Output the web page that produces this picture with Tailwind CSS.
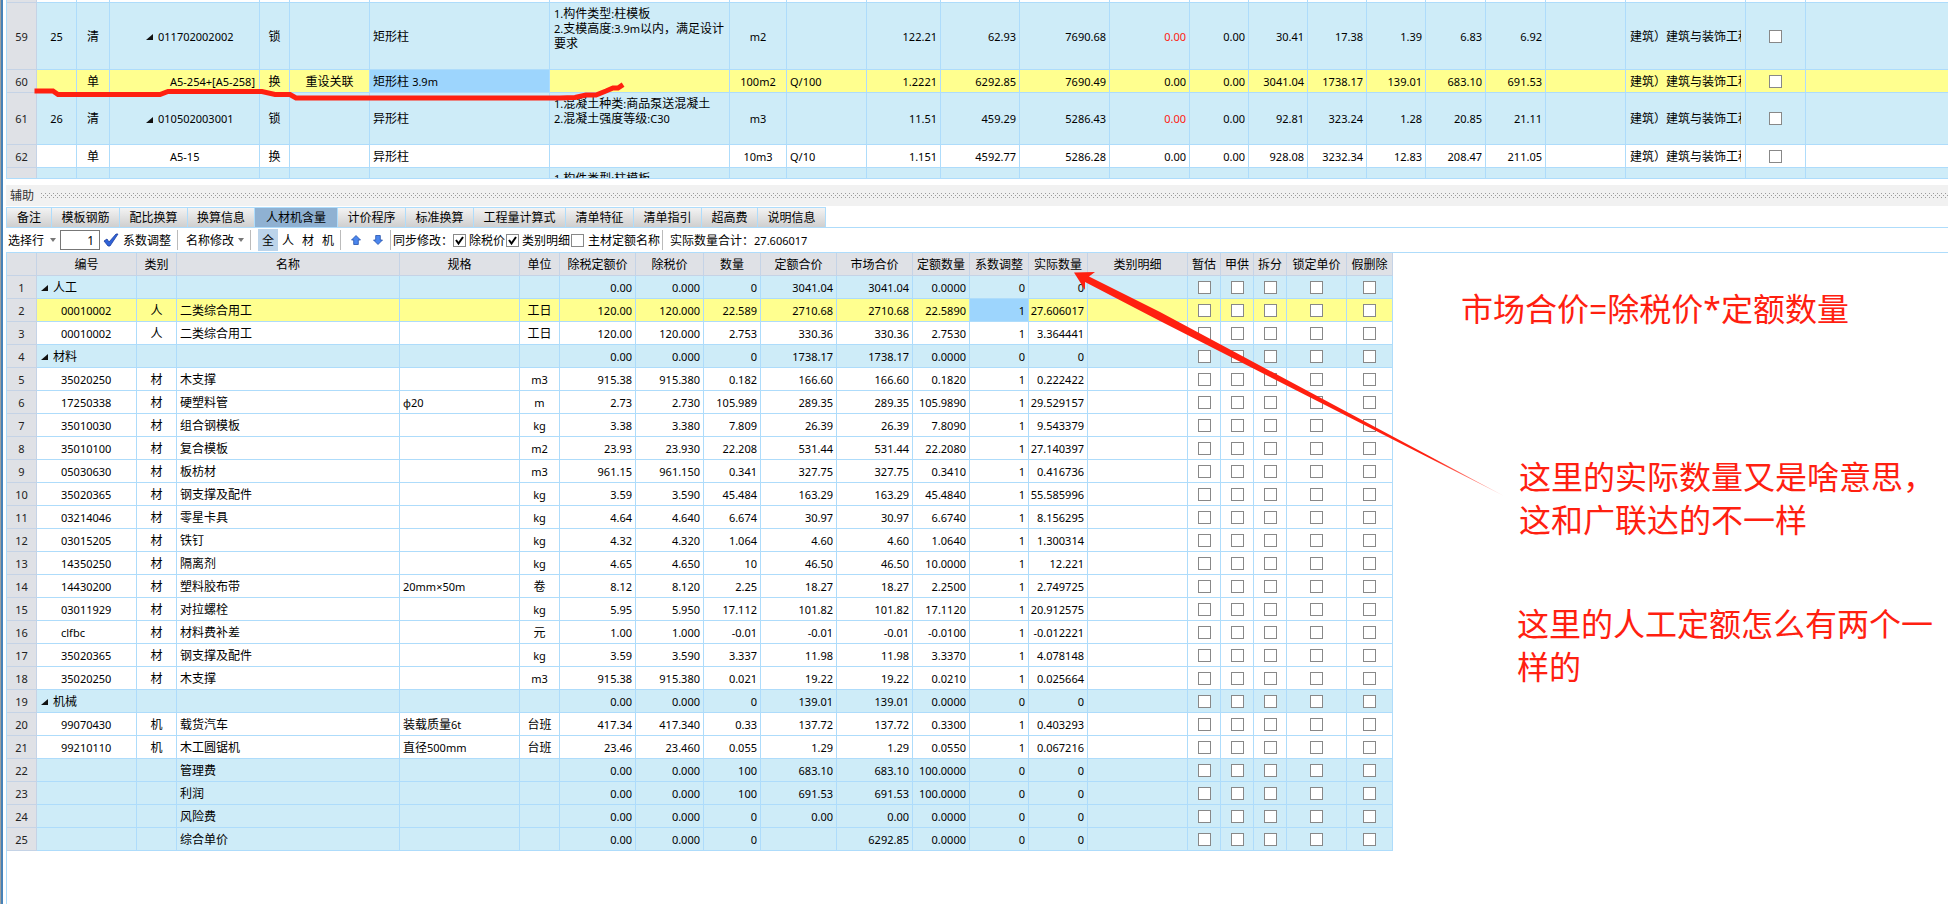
<!DOCTYPE html>
<html lang="zh-CN">
<head>
<meta charset="utf-8">
<title>人材机含量</title>
<script src="https://cdn.jsdelivr.net/npm/@tailwindcss/browser@4"></script>
</head>
<body class="bg-white text-black text-[12px] leading-[15px] font-['Noto_Sans','Noto_Sans_CJK_SC',sans-serif]">
<div class="relative min-h-screen flex overflow-hidden">
  <div class="w-[3px] shrink-0 bg-[#4682b8] border-l border-[#a0a0a0]"></div>
  <main class="flex-1 min-w-0 ml-[3px]">
    <section class="h-[179px] overflow-hidden border-l border-b border-[#aedcfb]" aria-label="清单">
      <table class="w-full table-fixed border-separate border-spacing-0">
        <colgroup id="billCols"></colgroup>
        <tbody id="bill"></tbody>
      </table>
    </section>

    <div class="mt-[6px] h-[21px] bg-[#f1f1f1] flex items-center gap-[7px] pl-1 pr-0">
      <span class="text-[#333]">辅助</span>
      <svg class="flex-1 h-[5px]" aria-hidden="true"><defs><pattern id="grip" width="4" height="4" patternUnits="userSpaceOnUse"><rect width="1" height="1" fill="#9a9a9a"/><rect x="2" y="2" width="1" height="1" fill="#9a9a9a"/></pattern></defs><rect width="100%" height="5" fill="url(#grip)"/></svg>
    </div>

    <nav class="mt-px h-[21px] flex border-b border-[#aedcfb]" id="tabs"></nav>

    <div class="h-6 flex items-center whitespace-nowrap">
      <button class="ml-[2px]">选择行</button>
      <svg class="ml-[6px] w-[6px] h-1" viewBox="0 0 6 4"><path d="M0 0h6L3 4z" fill="#777"/></svg>
      <input class="ml-[4px] w-10 h-5 border border-[#777] bg-white text-right pr-[5px]" value="1" aria-label="选择行">
      <button class="ml-[3px] flex items-center gap-[4px]">
        <svg class="w-4 h-[14px]" viewBox="0 0 16 14"><path d="M1 8l3-2 2 3L13 1l2 0L7 13H5z" fill="#2f62d8" stroke="#1d3f9e" stroke-width=".8"/></svg>
        系数调整</button>
      <i class="ml-[6px] w-px h-5 bg-[#bbb]"></i>
      <button class="ml-[8px]">名称修改</button>
      <svg class="ml-[4px] w-[6px] h-1" viewBox="0 0 6 4"><path d="M0 0h6L3 4z" fill="#777"/></svg>
      <i class="ml-[6px] w-px h-5 bg-[#bbb]"></i>
      <button class="ml-[7px] w-5 h-[22px] bg-[#bcd4ea]">全</button>
      <button class="w-5 h-[22px]">人</button>
      <button class="w-5 h-[22px]">材</button>
      <button class="w-5 h-[22px]">机</button>
      <i class="ml-[2px] w-px h-5 bg-[#bbb]"></i>
      <button class="ml-[10px]" aria-label="上移"><svg class="w-[10px] h-[10px]" viewBox="0 0 10 10"><path d="M5 .5L9.5 5H7.3v4.5H2.7V5H.5z" fill="#4b86ee" stroke="#2450ab" stroke-width=".8"/></svg></button>
      <button class="ml-[12px]" aria-label="下移"><svg class="w-[10px] h-[10px]" viewBox="0 0 10 10"><path d="M5 9.5L.5 5h2.2V.5h4.6V5h2.2z" fill="#4b86ee" stroke="#2450ab" stroke-width=".8"/></svg></button>
      <i class="ml-[7px] w-px h-5 bg-[#bbb]"></i>
      <span class="ml-[2px] w-[60px]">同步修改：</span>
      <label class="flex items-center gap-[3px] w-[53px]"><input type="checkbox" checked class="appearance-none w-[13px] h-[13px] border border-[#888] bg-white checked:bg-[url('data:image/svg+xml,%3Csvg%20xmlns=%22http://www.w3.org/2000/svg%22%20viewBox=%220%200%2011%2011%22%3E%3Cpath%20d=%22M2%205l2.500%203.500L9%202%22%20fill=%22none%22%20stroke=%22black%22%20stroke-width=%222%22/%3E%3C/svg%3E')]">除税价</label>
      <label class="flex items-center gap-[3px] w-[65px]"><input type="checkbox" checked class="appearance-none w-[13px] h-[13px] border border-[#888] bg-white checked:bg-[url('data:image/svg+xml,%3Csvg%20xmlns=%22http://www.w3.org/2000/svg%22%20viewBox=%220%200%2011%2011%22%3E%3Cpath%20d=%22M2%205l2.500%203.500L9%202%22%20fill=%22none%22%20stroke=%22black%22%20stroke-width=%222%22/%3E%3C/svg%3E')]">类别明细</label>
      <label class="flex items-center gap-[4px]"><input type="checkbox" class="appearance-none w-[13px] h-[13px] border border-[#888] bg-white">主材定额名称</label>
      <i class="ml-[2px] w-px h-5 bg-[#bbb]"></i>
      <span class="ml-[7px]">实际数量合计：</span><span class="text-[11px]">27.606017</span>
    </div>

    <section class="border-l border-t border-[#aedcfb] min-h-[652px]" aria-label="人材机含量">
      <table class="table-fixed w-[1386px] border-separate border-spacing-0">
        <colgroup id="resCols"></colgroup>
        <thead><tr id="resHead"></tr></thead>
        <tbody id="res"></tbody>
      </table>
    </section>
  </main>

  <svg class="absolute left-0 top-0 w-[1520px] h-[520px] pointer-events-none" viewBox="0 0 1520 520" aria-hidden="true">
    <defs><linearGradient id="fade" gradientUnits="userSpaceOnUse" x1="1430" y1="456" x2="1504" y2="496"><stop offset="0" stop-color="#ff2010"/><stop offset="1" stop-color="#ff2010" stop-opacity=".3"/></linearGradient></defs>
    <path d="M37 91H53L58 94.500H160L168 91.500H262L275 94.500H290L296 98H560L575 97.500L586 95H596L606 91L613 88H618L621 86" fill="none" stroke="#ff2010" stroke-width="5" stroke-linecap="square"/>
    <path d="M1074 272.500L1095 272L1089 276.500L1160 312L1504 496L1160 321L1085 282L1085 290z" fill="url(#fade)"/>
  </svg>
  <p class="absolute left-[1461px] top-[287px] text-[32px] leading-[43px] whitespace-nowrap text-[#ff2010]">市场合价=除税价*定额数量</p>
  <p class="absolute left-[1519px] top-[455px] text-[32px] leading-[43px] whitespace-nowrap text-[#ff2010]">这里的实际数量又是啥意思，<br>这和广联达的不一样</p>
  <p class="absolute left-[1517px] top-[602px] text-[32px] leading-[43px] whitespace-nowrap text-[#ff2010]">这里的人工定额怎么有两个一<br>样的</p>
</div>

<script>
const $ = id => document.getElementById(id);
const cols = ws => ws.map(w => w ? `<col style="width:${w}px">` : '<col>').join('');
// Latin runs are set one pixel smaller than the Chinese text beside them
const fmt = s => String(s).replace(/[\x21-\x7e\u00d7\u03c6]+(?: +[\x21-\x7e]+)*/g, m => `<span class="text-[11px]">${m}</span>`);
const box = n => `<input type="checkbox" aria-label="${n}" class="block mx-auto appearance-none w-[13px] h-[13px] border border-[#888] bg-white">`;
const tri = '<svg class="inline-block w-[7px] h-[6px] mr-[5px]" viewBox="0 0 7 6"><path d="M7 0v6H0z" fill="#111"/></svg>';
const BG = {g: 'bg-[#ceecf8]', y: 'bg-[#ffff8f]', w: 'bg-white'};
const NUM = 'border-r border-b border-[#c5d3e6] bg-[#dfe1e6] p-0 text-center font-normal text-[#222]';
const CELL = 'border-r border-b border-[#aedcfb] p-0 whitespace-nowrap overflow-hidden';
const AL = {l: 'text-left pl-[3px]', r: 'text-right pr-[3px]', c: 'text-center'};

// ---- bill table ----
$('billCols').innerHTML = cols([30,40,33,150,30,80,180,180,57,80,74,79,90,80,59,59,59,59,60,60,80,120,60,0]);
const bill = [
 ['w','h-[3px]'],
 ['g','h-[67px]','59','25','清','t011702002002','锁','','矩形柱','1.构件类型:柱模板<br>2.支模高度:3.9m以内，满足设计<br>要求','m2','','122.21','62.93','7690.68','0.00','0.00','30.41','17.38','1.39','6.83','6.92'],
 ['y','h-[23px]','60','','单','A5-254+[A5-258]','换','重设关联','矩形柱 3.9m','','100m2','Q/100','1.2221','6292.85','7690.49','0.00','0.00','3041.04','1738.17','139.01','683.10','691.53'],
 ['g','h-[52px]','61','26','清','t010502003001','锁','','异形柱','1.混凝土种类:商品泵送混凝土<br>2.混凝土强度等级:C30','m3','','11.51','459.29','5286.43','0.00','0.00','92.81','323.24','1.28','20.85','21.11'],
 ['w','h-[23px]','62','','单','A5-15','换','','异形柱','','10m3','Q/10','1.151','4592.77','5286.28','0.00','0.00','928.08','3232.34','12.83','208.47','211.05'],
 ['g','h-[11px]']
];
const billAl = 'ccdcclxclrrrrrrrrrr';
$('bill').innerHTML = bill.map(([t, h, no = '', ...v], i) => {
  const full = v.length > 0;
  let row = `<tr class="${h} ${BG[t]}"><th scope="row" class="${NUM}">${fmt(no)}</th>`;
  for (let c = 0; c < 19; c++) {
    const s = v[c] || '';
    if (c === 2) {
      const parent = s[0] === 't';
      row += `<td class="${CELL} text-left ${parent ? 'pl-9' : 'pl-[60px]'}">${parent ? tri + fmt(s.slice(1)) : fmt(s)}</td>`;
    } else if (c === 6) {
      row += i === 5
        ? `<td class="border-r border-b border-[#aedcfb] p-0 pl-1 whitespace-nowrap"><div class="h-[10px] overflow-hidden pt-[3px]">${fmt('1.构件类型:柱模板')}</div></td>`
        : `<td class="border-r border-b border-[#aedcfb] p-0 pl-1 ${s ? 'pt-[3px]' : ''} align-top whitespace-nowrap">${s.split('<br>').map(fmt).join('<br>')}</td>`;
    } else {
      const extra = c === 5 && t === 'y' ? 'bg-[#9dd5fd]' : c === 12 && t === 'g' ? 'text-[#ff2010]' : '';
      const al = c === 7 ? AL.c : AL[billAl[c]];
      row += `<td class="${CELL} ${al} ${extra}">${fmt(s)}</td>`;
    }
  }
  return row + `<td class="${CELL}"></td><td class="${CELL}">${full ? '<div class="mx-1 overflow-hidden">建筑）建筑与装饰工程</div>' : ''}</td><td class="${CELL}">${full ? box('选择 ' + no) : ''}</td><td class="border-b border-[#aedcfb] p-0"></td></tr>`;
}).join('');

// ---- tabs ----
const tabs = [['备注','w-[46px] border-l'],['模板钢筋','w-[68px]'],['配比换算','w-[68px]'],['换算信息','w-[67px]'],['人材机含量','w-[83px]'],['计价程序','w-[68px]'],['标准换算','w-[68px]'],['工程量计算式','w-[92px]'],['清单特征','w-[68px]'],['清单指引','w-[68px]'],['超高费','w-[56px]'],['说明信息','w-[68px]']];
$('tabs').innerHTML = tabs.map(([n, w], i) => `<button class="${w} border-t border-r border-[#aedcfb] leading-[18px] ${i === 4 ? 'bg-[#8fb1d2]' : 'bg-linear-to-b from-[#f3f3f3] to-[#cfcfcf]'}">${n}</button>`).join('');

// ---- resource table ----
$('resCols').innerHTML = cols([30,100,40,223,120,40,76,68,57,76,76,57,59,59,100,33,33,33,60,46]);
const heads = ['','编号','类别','名称','规格','单位','除税定额价','除税价','数量','定额合价','市场合价','定额数量','系数调整','实际数量','类别明细','暂估','甲供','拆分','锁定单价','假删除'];
$('resHead').innerHTML = heads.map(h => `<th scope="col" class="h-[23px] border-r border-b border-[#c5d3e6] bg-[#dfe1e6] p-0 font-normal whitespace-nowrap">${h}</th>`).join('');
const res = `g|t人工|||||0.00|0.000|0|3041.04|3041.04|0.0000|0|0
y|00010002|人|二类综合用工||工日|120.00|120.000|22.589|2710.68|2710.68|22.5890|1|27.606017
w|00010002|人|二类综合用工||工日|120.00|120.000|2.753|330.36|330.36|2.7530|1|3.364441
g|t材料|||||0.00|0.000|0|1738.17|1738.17|0.0000|0|0
w|35020250|材|木支撑||m3|915.38|915.380|0.182|166.60|166.60|0.1820|1|0.222422
w|17250338|材|硬塑料管|φ20|m|2.73|2.730|105.989|289.35|289.35|105.9890|1|29.529157
w|35010030|材|组合钢模板||kg|3.38|3.380|7.809|26.39|26.39|7.8090|1|9.543379
w|35010100|材|复合模板||m2|23.93|23.930|22.208|531.44|531.44|22.2080|1|27.140397
w|05030630|材|板枋材||m3|961.15|961.150|0.341|327.75|327.75|0.3410|1|0.416736
w|35020365|材|钢支撑及配件||kg|3.59|3.590|45.484|163.29|163.29|45.4840|1|55.585996
w|03214046|材|零星卡具||kg|4.64|4.640|6.674|30.97|30.97|6.6740|1|8.156295
w|03015205|材|铁钉||kg|4.32|4.320|1.064|4.60|4.60|1.0640|1|1.300314
w|14350250|材|隔离剂||kg|4.65|4.650|10|46.50|46.50|10.0000|1|12.221
w|14430200|材|塑料胶布带|20mm×50m|卷|8.12|8.120|2.25|18.27|18.27|2.2500|1|2.749725
w|03011929|材|对拉螺栓||kg|5.95|5.950|17.112|101.82|101.82|17.1120|1|20.912575
w|clfbc|材|材料费补差||元|1.00|1.000|-0.01|-0.01|-0.01|-0.0100|1|-0.012221
w|35020365|材|钢支撑及配件||kg|3.59|3.590|3.337|11.98|11.98|3.3370|1|4.078148
w|35020250|材|木支撑||m3|915.38|915.380|0.021|19.22|19.22|0.0210|1|0.025664
g|t机械|||||0.00|0.000|0|139.01|139.01|0.0000|0|0
w|99070430|机|载货汽车|装载质量6t|台班|417.34|417.340|0.33|137.72|137.72|0.3300|1|0.403293
w|99210110|机|木工圆锯机|直径500mm|台班|23.46|23.460|0.055|1.29|1.29|0.0550|1|0.067216
g|||管理费|||0.00|0.000|100|683.10|683.10|100.0000|0|0
g|||利润|||0.00|0.000|100|691.53|691.53|100.0000|0|0
g|||风险费|||0.00|0.000|0|0.00|0.00|0.0000|0|0
g|||综合单价|||0.00|0.000|0||6292.85|0.0000|0|0`.split('\n').map(l => l.split('|'));
$('res').innerHTML = res.map(([t, ...v], i) => {
  let h = `<tr class="h-[23px] ${BG[t]}"><th scope="row" class="${NUM}">${fmt(i + 1)}</th>`;
  v.forEach((s, c) => {
    if (c === 0) {
      const parent = s[0] === 't';
      h += `<td class="${CELL} text-left ${parent ? 'pl-1' : 'pl-6'}">${parent ? tri + s.slice(1) : fmt(s)}</td>`;
      return;
    }
    const a = c === 1 || c === 4 ? AL.c : c < 4 ? AL.l : AL.r;
    h += `<td class="${CELL} ${a} ${t === 'y' && c === 11 ? 'bg-[#9dd5fd]' : ''}">${fmt(s)}</td>`;
  });
  h += `<td class="${CELL}"></td>`;
  for (let c = 15; c < 20; c++) h += `<td class="${CELL}">${box(heads[c] + ' ' + (i + 1))}</td>`;
  return h + '</tr>';
}).join('');
</script>
</body>
</html>
